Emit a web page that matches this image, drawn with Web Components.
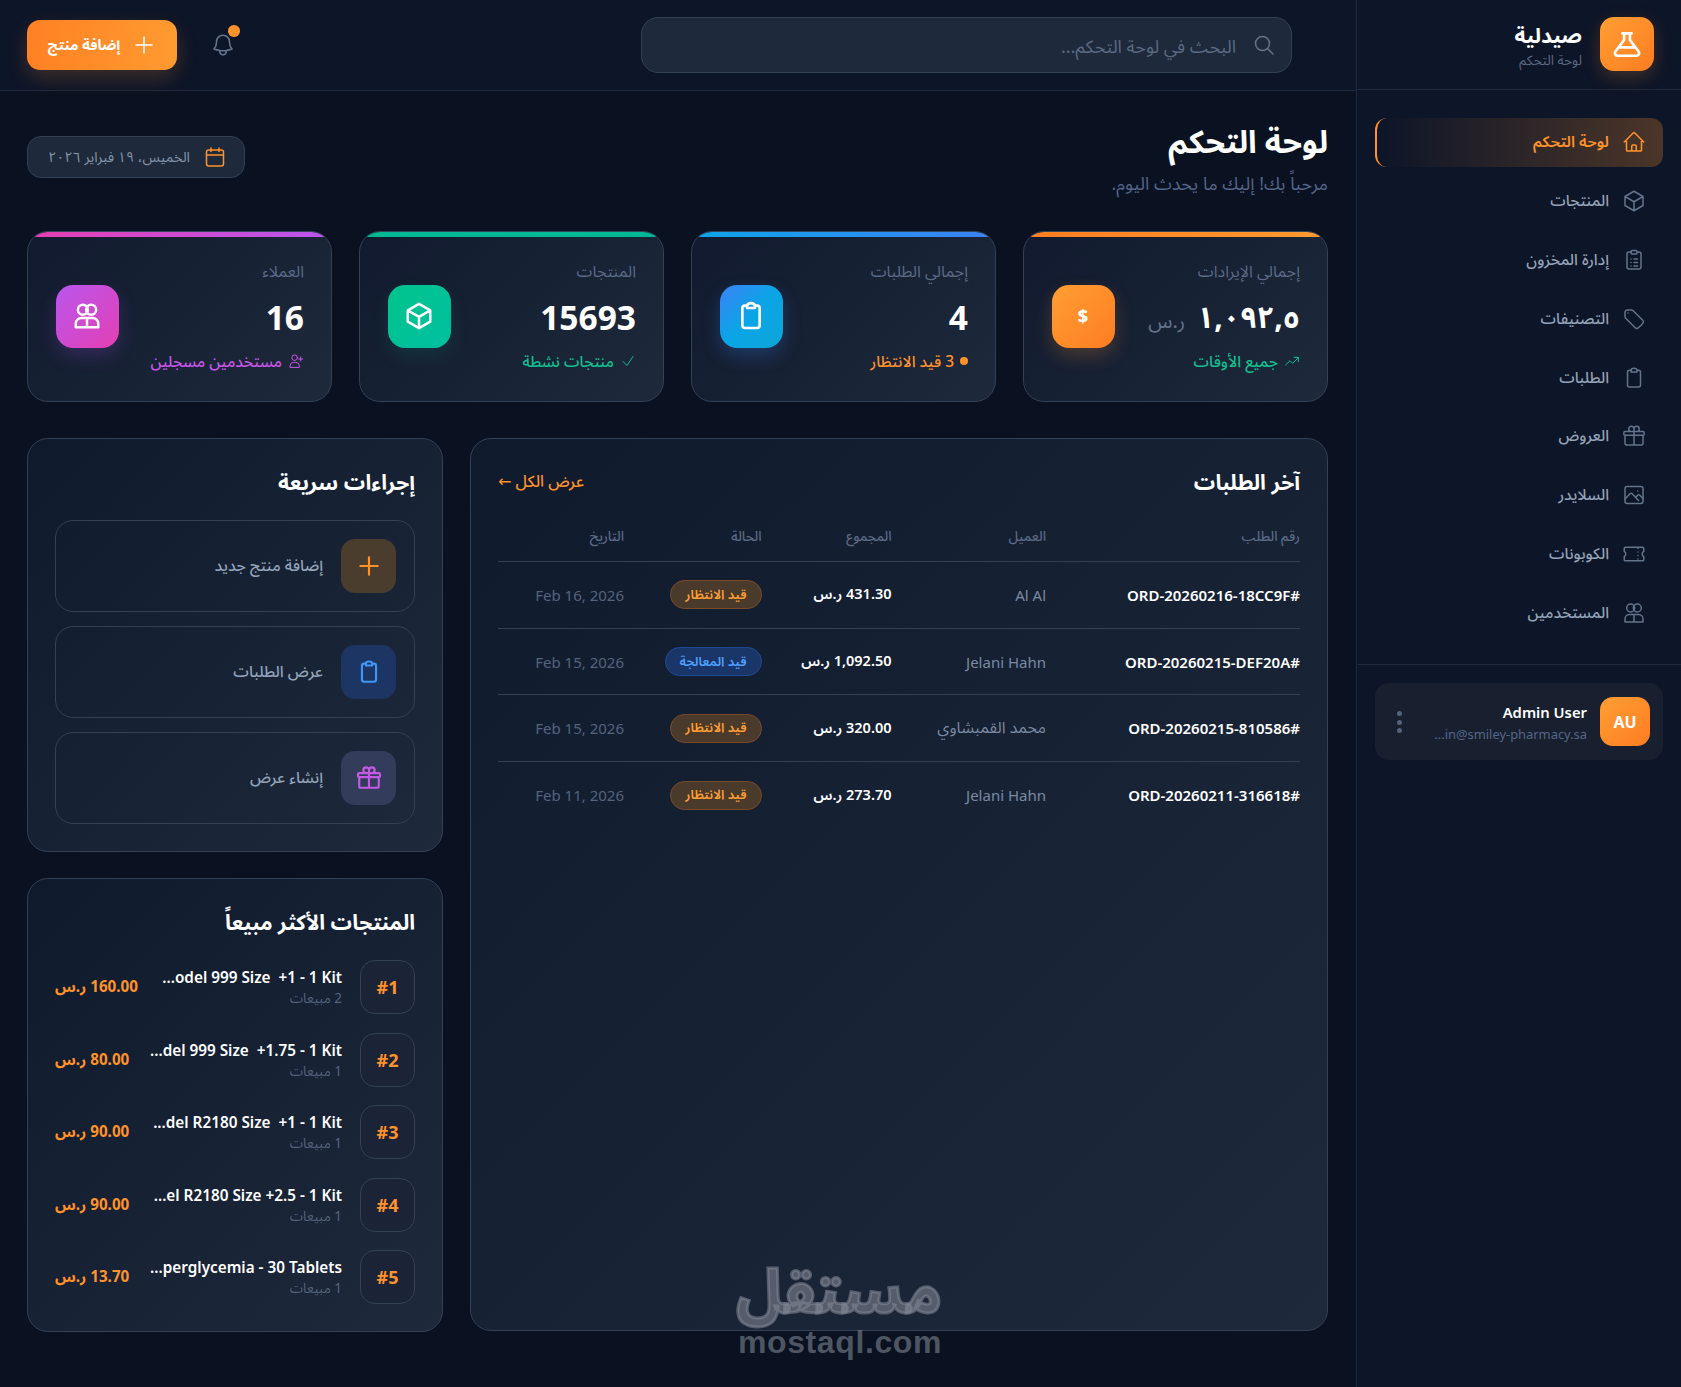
<!DOCTYPE html>
<html dir="rtl" lang="ar">
<head>
<meta charset="utf-8">
<title>صيدلية</title>
<style>
html,body{margin:0;padding:0;height:1387px;overflow:hidden;background:#0a1120}
body{font-family:"Noto Sans","Noto Sans Arabic","DejaVu Sans",sans-serif;color:#fff}
</style>
</head>
<body>
<x-app></x-app>
<script>
const P={
home:'<path d="M2.25 12l8.954-8.955c.44-.439 1.152-.439 1.591 0L21.75 12M4.5 9.75v10.125c0 .621.504 1.125 1.125 1.125H9.75v-4.875c0-.621.504-1.125 1.125-1.125h2.25c.621 0 1.125.504 1.125 1.125V21h4.125c.621 0 1.125-.504 1.125-1.125V9.75M8.25 21h8.25"/>',
cube:'<path d="M21 7.5l-9-5.25L3 7.5m18 0l-9 5.25m9-5.25v9l-9 5.25M3 7.5l9 5.25M3 7.5v9l9 5.25m0-9v9"/>',
list:'<path d="M9 4H7a2 2 0 0 0-2 2v13a2 2 0 0 0 2 2h10a2 2 0 0 0 2-2V6a2 2 0 0 0-2-2h-2"/><rect x="9" y="2.5" width="6" height="3.5" rx="1.2"/><path d="M9 11h.01M12 11h3.5M9 14.5h.01M12 14.5h3.5M9 18h.01M12 18h3.5"/>',
tag:'<path d="M9.568 3H5.25A2.25 2.25 0 003 5.25v4.318c0 .597.237 1.17.659 1.591l9.581 9.581c.699.699 1.78.872 2.607.33a18.095 18.095 0 005.223-5.223c.542-.827.369-1.908-.33-2.607L11.16 3.66A2.25 2.25 0 009.568 3z"/><path d="M6 6h.008v.008H6V6z"/>',
clip:'<path d="M9 4.2H7.5A2 2 0 0 0 5.5 6.2V19a2 2 0 0 0 2 2h9a2 2 0 0 0 2-2V6.2a2 2 0 0 0-2-2H15"/><path d="M9 4.5a3 2.2 0 0 1 6 0V6H9z"/>',
gift:'<path d="M21 11.25v8.25a1.5 1.5 0 01-1.5 1.5h-15a1.5 1.5 0 01-1.5-1.5v-8.25M12 4.875A2.625 2.625 0 109.375 7.5H12m0-2.625V7.5m0-2.625A2.625 2.625 0 1114.625 7.5H12m0 0V21m-9-9.75h18c.621 0 1.125-.504 1.125-1.125v-1.5c0-.621-.504-1.125-1.125-1.125H3c-.621 0-1.125.504-1.125 1.125v1.5c0 .621.504 1.125 1.125 1.125z"/>',
photo:'<rect x="3" y="3.5" width="18" height="17" rx="2.2"/><path d="M3 16l5-5.2a1.5 1.5 0 0 1 2.2 0l6.3 6.7M14 14l1.7-1.7a1.5 1.5 0 0 1 2.1 0L21 15.5M15.8 8h.01"/>',
ticket:'<path d="M16 6.5v.01m0 3.5v.01m0 3.5v.01m0 3.5v.01M3.375 5.25c-.621 0-1.125.504-1.125 1.125v3.026a2.999 2.999 0 010 5.198v3.026c0 .621.504 1.125 1.125 1.125h17.25c.621 0 1.125-.504 1.125-1.125v-3.026a2.999 2.999 0 010-5.198V6.375c0-.621-.504-1.125-1.125-1.125H3.375z"/>',
users:'<circle cx="8.7" cy="7" r="4"/><circle cx="15.3" cy="7" r="4"/><path d="M12 13.5H7.5A4.5 4.5 0 0 0 3 18v3h18v-3a4.5 4.5 0 0 0-4.500-4.500H12zM12 14v7"/>',
flask:'<path d="M8.500 4h7M9.800 4v5L3.300 17.600A2 2 0 0 0 5 20.800h14a2 2 0 0 0 1.700-3.200L14.200 9V4M6.500 14.500h11"/>',
search:'<circle cx="10.500" cy="10.500" r="7"/><path d="M21 21l-5.500-5.500"/>',
bell:'<path d="M14.857 17.082a23.848 23.848 0 005.454-1.310A8.967 8.967 0 0118 9.750V9A6 6 0 006 9v.750a8.967 8.967 0 01-2.312 6.022c1.733.640 3.560 1.085 5.455 1.310m5.714 0a24.255 24.255 0 01-5.714 0m5.714 0a3 3 0 11-5.714 0"/>',
plus:'<path d="M12 4v16M4 12h16"/>',
cal:'<rect x="3.500" y="5" width="17" height="16" rx="2.200"/><path d="M8 3v3.500M16 3v3.500M3.500 10h17M8 10h8"/>',
trend:'<path d="M2.500 18l6.500-6.500 4 4L21.500 7M15 6.500h6.500V13"/>',
check:'<path d="M4.500 12.750l6 6 9-13.500"/>',
userplus:'<circle cx="10" cy="7" r="4.200"/><path d="M3 21v-1.500A5.500 5.500 0 0 1 8.500 14h3a5.500 5.500 0 0 1 5.500 5.500V21zM19 6v6M16 9h6"/>'
};
function def(name,css,render){
  customElements.define(name,class extends HTMLElement{
    connectedCallback(){
      if(this.shadowRoot)return;
      const s=this.attachShadow({mode:'open'});
      s.innerHTML='<style>'+css+'</style>'+render(this);
    }
  });
}
const a=(e,n,d='')=>e.getAttribute(n)??d;

def('x-icon',`:host{display:inline-flex;flex:none;line-height:0}svg{display:block;fill:none;stroke:currentColor;stroke-linecap:round;stroke-linejoin:round}`,
e=>`<svg viewBox="0 0 24 24" width="${a(e,'size','24')}" height="${a(e,'size','24')}" stroke-width="${a(e,'sw','1.5')}">${P[a(e,'name')]||''}</svg>`);

def('x-nav-item',`:host{display:flex;align-items:center;gap:13px;height:48.8px;box-sizing:border-box;padding:0 17px;border-radius:12px;color:#94a3b8;font-size:15.500px;font-weight:500;white-space:nowrap}
:host([active]){color:#ff922b;background:linear-gradient(to left,rgba(255,146,43,.26),rgba(255,146,43,0));border-left:2px solid #ff922b;font-weight:600}
x-icon{color:#64748b}:host([active]) x-icon{color:#ff922b}`,
e=>`<x-icon name="${a(e,'icon')}"></x-icon><span><slot></slot></span>`);

def('x-sidebar',`:host{display:flex;flex-direction:column;width:325px;box-sizing:border-box;height:1387px;background:#0d1528;border-left:1px solid #1e293b}
.brand{height:90px;box-sizing:border-box;border-bottom:1px solid #1e293b;display:flex;align-items:center;gap:18px;padding:0 27px 0 18px}
.logo{width:54px;height:54px;border-radius:14px;background:linear-gradient(135deg,#ff9e33,#ff7d22);display:flex;align-items:center;justify-content:center;box-shadow:0 6px 18px rgba(255,146,43,.22);color:#fff;margin-top:-1px}
.t{font-size:21px;font-weight:700;line-height:30px;color:#fff}.s{font-size:13.500px;line-height:18px;color:#5b6a82;margin-top:1px}
nav{display:flex;flex-direction:column;gap:10px;padding:28px 18px 0;height:575px;box-sizing:border-box;border-bottom:1px solid #1e293b}
.u{margin:18px 18px 0;height:77px;box-sizing:border-box;border-radius:14px;background:#18202f;display:flex;align-items:center;gap:13px;padding:0 13px}
.av{width:50px;height:49px;border-radius:13px;background:linear-gradient(135deg,#ff9e33,#ff7d22);display:flex;align-items:center;justify-content:center;font-weight:700;font-size:16px;color:#fff;flex:none}
.n{font-size:14.800px;font-weight:600;line-height:22px;color:#fff;padding-top:1px}.m{font-size:12.900px;line-height:20px;color:#54658a;direction:ltr;text-align:right;margin-top:1px}
.i{flex:1}.d{display:flex;flex-direction:column;gap:3.500px;margin-left:9px;margin-top:1px}.d b{width:5px;height:5px;border-radius:50%;background:#55637a;display:block}`,
e=>`<div class="brand"><div class="logo"><x-icon name="flask" size="32" sw="2"></x-icon></div><div><div class="t">صيدلية</div><div class="s">لوحة التحكم</div></div></div>
<nav>
<x-nav-item icon="home" active>لوحة التحكم</x-nav-item>
<x-nav-item icon="cube">المنتجات</x-nav-item>
<x-nav-item icon="list">إدارة المخزون</x-nav-item>
<x-nav-item icon="tag">التصنيفات</x-nav-item>
<x-nav-item icon="clip">الطلبات</x-nav-item>
<x-nav-item icon="gift">العروض</x-nav-item>
<x-nav-item icon="photo">السلايدر</x-nav-item>
<x-nav-item icon="ticket">الكوبونات</x-nav-item>
<x-nav-item icon="users">المستخدمين</x-nav-item>
</nav>
<div class="u"><div class="av">AU</div><div class="i"><div class="n">Admin User</div><div class="m">...in@smiley-pharmacy.sa</div></div><div class="d"><b></b><b></b><b></b></div></div>`);

def('x-topbar',`:host{display:flex;align-items:center;justify-content:space-between;height:91px;box-sizing:border-box;border-bottom:1px solid #1e293b;background:#0d1528;padding:0 64px 0 27px}
.se{width:651px;height:56px;box-sizing:border-box;border:1px solid #334155;border-radius:17px;background:#1e293b;display:flex;align-items:center;gap:16px;padding:0 15px;color:#64748b;font-size:18px}
.se span{color:#5b6a82;padding-top:3px}
.l{display:flex;align-items:center;gap:33px;direction:rtl}
.bell{position:relative;color:#64748b;display:flex}.bell i{position:absolute;top:-7px;left:18px;width:11.500px;height:11.500px;border-radius:50%;background:#ff922b}
.btn{width:150px;height:50px;border-radius:13px;background:linear-gradient(to left,#ff9a30,#ff8123);box-shadow:0 8px 20px rgba(255,146,43,.2);display:flex;align-items:center;justify-content:center;gap:12px;font-weight:700;font-size:14.500px;color:#fff}
.btn span{padding-top:1px}`,
e=>`<div class="se"><x-icon name="search"></x-icon><span>البحث في لوحة التحكم...</span></div>
<div class="l"><div class="bell"><i></i><x-icon name="bell" size="26"></x-icon></div><div class="btn"><x-icon name="plus"></x-icon><span>إضافة منتج</span></div></div>`);

def('x-stat-card',`:host{display:flex;align-items:center;justify-content:space-between;height:171px;box-sizing:border-box;padding:0 27px 0 27.500px;position:relative;overflow:hidden;border:1px solid #334155;border-radius:21px;background:linear-gradient(135deg,#111a2e,#1e293b)}
.bar{position:absolute;top:0;left:0;right:0;height:5px;background:var(--bar)}
.tx{margin-top:-2px}
.lb{font-size:16px;line-height:20px;color:#5b6a85}
.v{font-size:var(--vf,33.500px);font-weight:700;line-height:44px;height:44px;margin-top:14px;color:#fff;white-space:nowrap;letter-spacing:var(--vs,0)}
.v small{font-size:20px;font-weight:400;color:#64748b;margin-right:12px;letter-spacing:0}
.sb{display:flex;align-items:center;gap:6px;font-size:15.500px;font-weight:500;line-height:20px;margin-top:12px;color:var(--c)}
.ic{width:63px;height:63px;border-radius:17px;background:var(--ic);display:flex;align-items:center;justify-content:center;color:#fff;box-shadow:0 8px 18px var(--sh);font-weight:800;font-size:18px;margin-top:-1px}
.dot{width:8px;height:8px;border-radius:50%;background:var(--c)}`,
e=>{
 const ic=a(e,'icon');
 const si=a(e,'subicon');
 return `<div class="bar"></div><div class="tx"><div class="lb">${a(e,'label')}</div><div class="v" >${a(e,'value')}${e.hasAttribute('unit')?`<small>${a(e,'unit')}</small>`:''}</div><div class="sb">${si==='dot'?'<span class="dot"></span>':`<x-icon name="${si}" size="16" sw="1.5"></x-icon>`}<span>${a(e,'sub')}</span></div></div><div class="ic">${ic==='$'?'$':`<x-icon name="${ic}" size="${a(e,'isize','30')}" sw="2"></x-icon>`}</div>`;
});

def('x-panel',`:host{display:block;box-sizing:border-box;padding:27px;border:1px solid #334155;border-radius:21px;background:linear-gradient(135deg,#101a2d,#1e293b)}
.h{display:flex;justify-content:space-between;align-items:center;height:36px;margin-bottom:var(--mb,18px)}
h2{margin:-4px 0 0;font-size:21.200px;font-weight:700;color:#fff;line-height:36px}
.lk{font-size:16px;font-weight:500;color:#ff922b;margin-top:-5px}`,
e=>`<div class="h"><h2>${a(e,'heading')}</h2>${e.hasAttribute('link')?`<span class="lk">${a(e,'link')}</span>`:''}</div><slot></slot>`);

def('x-action',`:host{display:flex;align-items:center;gap:18px;height:92px;box-sizing:border-box;padding:0 18px;border:1px solid #334155;border-radius:18px;color:#94a3b8;font-size:15.700px;font-weight:500}
.i{width:55px;height:54px;border-radius:14px;display:flex;align-items:center;justify-content:center;background:var(--bg);color:var(--c)}`,
e=>`<div class="i"><x-icon name="${a(e,'icon')}" size="26" sw="2"></x-icon></div><span><slot></slot></span>`);

def('x-rank-row',`:host{display:flex;align-items:center;gap:18px;height:54px}
.r{width:55px;height:54px;box-sizing:border-box;border:1px solid #334155;border-radius:15px;background:#1b2436;display:flex;align-items:center;justify-content:center;color:#ff922b;font-weight:700;font-size:18px;flex:none}
.m{flex:1;min-width:0}
.n{font-size:15.300px;font-weight:600;line-height:22px;color:#fff;direction:ltr;text-align:right;white-space:pre}
.s{font-size:13.500px;line-height:20px;color:#55637c}
.p{font-size:15.200px;font-weight:700;color:#ff922b;flex:none;white-space:nowrap}`,
e=>`<div class="r">#${a(e,'rank')}</div><div class="m"><div class="n">${a(e,'name')}</div><div class="s">${a(e,'count')} مبيعات</div></div><div class="p">${a(e,'price')} ر.س</div>`);

def('x-badge',`:host{display:inline-flex;align-items:center;height:29px;box-sizing:border-box;padding:0 14px;border-radius:15px;font-size:13px;font-weight:600;border:1px solid var(--b);background:var(--bg);color:var(--c);white-space:nowrap}
:host([kind=pending]){--b:#7c4a26;--bg:#4a3a2b;--c:#ff9f33}
:host([kind=processing]){--b:#1e4a95;--bg:#1a3567;--c:#4ea0ff}`,e=>`<slot></slot>`);

const cols='grid-template-columns:254px 154.500px 130px 137.500px 126px;';
def('x-order-head',`:host{display:grid;${cols}align-items:center;height:51px;margin-top:9px;box-sizing:border-box;border-bottom:1px solid #334155;color:#5b6a85;font-size:13.500px;font-weight:500}`,
e=>`<span>رقم الطلب</span><span>العميل</span><span>المجموع</span><span>الحالة</span><span>التاريخ</span>`);
def('x-order-row',`:host{display:grid;${cols}align-items:center;height:66.700px;box-sizing:border-box;border-bottom:1px solid #334155;font-size:15px}
:host([last]){border-bottom:0}
.o{font-weight:600;color:#fff}
.c{color:#7a8aa2}.t{font-weight:600;color:#fff;font-size:14.500px}.d{color:#55637c;direction:ltr;text-align:right}
.ar{font-size:16px}`,
e=>`<span class="o">${a(e,'order')}</span><span class="c ${/[a-z]/i.test(a(e,'customer'))?'':'ar'}">${a(e,'customer')}</span><span class="t">${a(e,'total')} ر.س</span><span><x-badge kind="${a(e,'kind')}">${a(e,'status')}</x-badge></span><span class="d">${a(e,'date')}</span>`);

def('x-watermark',`:host{position:absolute;left:738px;top:1258px;width:204px;text-align:center;color:rgba(125,132,145,.6);pointer-events:none;direction:rtl}
.a{font-size:60px;font-weight:800;line-height:64px;height:64px;white-space:nowrap;-webkit-text-stroke:3px rgba(125,132,145,.6)}
.b{font:700 32px/34px "Liberation Sans",sans-serif;direction:ltr;letter-spacing:.6px;margin-top:3px}`,
e=>`<div class="a">مستقل</div><div class="b">mostaql.com</div>`);

def('x-app',`:host{display:flex;direction:rtl;width:1681px;height:1387px;background:#0a1120;overflow:hidden;position:relative}
.main{flex:1;min-width:0}
.c{padding:26px 28px 0 27px}
.hd{display:flex;justify-content:space-between;align-items:center;height:80px;margin-bottom:34px}
h1{margin:0;font-size:31.500px;font-weight:700;line-height:44px}
.sub{font-size:18px;line-height:24px;color:#54658a;margin-top:8px}
.date{display:flex;align-items:center;gap:13px;height:42px;box-sizing:border-box;padding:0 17px;border:1px solid #334155;border-radius:14px;background:#1e293b;color:#8493a8;font-size:14.200px;width:218px;white-space:nowrap}
.date x-icon{color:#ff922b}
.st{display:grid;grid-template-columns:repeat(4,1fr);gap:27px;margin-bottom:36px}
.g{display:grid;grid-template-columns:858px 416px;gap:27px;height:893px}
.side{display:flex;flex-direction:column;gap:26px;height:893px}
.act{display:flex;flex-direction:column;gap:14px}
.rk{display:flex;flex-direction:column;gap:18.500px}`,
e=>`<x-sidebar></x-sidebar><div class="main"><x-topbar></x-topbar><div class="c">
<div class="hd"><div><h1>لوحة التحكم</h1><div class="sub">مرحباً بك! إليك ما يحدث اليوم.</div></div><div class="date"><x-icon name="cal"></x-icon><span>الخميس، ١٩ فبراير ٢٠٢٦</span></div></div>
<div class="st">
<x-stat-card style="--vs:-3px;--vf:30px;--bar:linear-gradient(to left,#ff9a30,#ff7d22);--ic:linear-gradient(135deg,#ff9e33,#ff7d22);--sh:rgba(255,146,43,.22);--c:#10c090" label="إجمالي الإيرادات" value="١,٠٩٢,٥" unit="ر.س" sub="جميع الأوقات" subicon="trend" icon="$"></x-stat-card>
<x-stat-card style="--bar:linear-gradient(to left,#3b82f6,#0ea5e9);--ic:linear-gradient(135deg,#3b82f6,#0aa5e6 50%,#0ea5d8);--sh:rgba(59,130,246,.25);--c:#ff922b" label="إجمالي الطلبات" value="4" sub="3 قيد الانتظار" subicon="dot" icon="clip" isize="32"></x-stat-card>
<x-stat-card style="--bar:#00b894;--ic:linear-gradient(135deg,#00c48c,#00bfa0);--sh:rgba(0,190,150,.12);--c:#10c090" label="المنتجات" value="15693" sub="منتجات نشطة" subicon="check" icon="cube"></x-stat-card>
<x-stat-card style="--bar:linear-gradient(to left,#b956ee,#e53fb2);--ic:linear-gradient(135deg,#b956ee,#e53fb2);--sh:rgba(170,85,240,.2);--c:#c956e8" label="العملاء" value="16" sub="مستخدمين مسجلين" subicon="userplus" icon="users"></x-stat-card>
</div>
<div class="g">
<x-panel heading="آخر الطلبات" link="عرض الكل ←" style="--mb:0">
<x-order-head></x-order-head>
<x-order-row order="#ORD-20260216-18CC9F" customer="Al Al" total="431.30" kind="pending" status="قيد الانتظار" date="Feb 16, 2026"></x-order-row>
<x-order-row order="#ORD-20260215-DEF20A" customer="Jelani Hahn" total="1,092.50" kind="processing" status="قيد المعالجة" date="Feb 15, 2026"></x-order-row>
<x-order-row order="#ORD-20260215-810586" customer="محمد القمبشاوي" total="320.00" kind="pending" status="قيد الانتظار" date="Feb 15, 2026"></x-order-row>
<x-order-row last order="#ORD-20260211-316618" customer="Jelani Hahn" total="273.70" kind="pending" status="قيد الانتظار" date="Feb 11, 2026"></x-order-row>
</x-panel>
<div class="side">
<x-panel heading="إجراءات سريعة"><div class="act">
<x-action icon="plus" style="--bg:#4a3d2e;--c:#ff922b">إضافة منتج جديد</x-action>
<x-action icon="clip" style="--bg:#1c3563;--c:#3f96f5">عرض الطلبات</x-action>
<x-action icon="gift" style="--bg:#333c5a;--c:#c45ae6">إنشاء عرض</x-action>
</div></x-panel>
<x-panel heading="المنتجات الأكثر مبيعاً"><div class="rk">
<x-rank-row rank="1" name="...odel 999 Size  +1 - 1 Kit" count="2" price="160.00"></x-rank-row>
<x-rank-row rank="2" name="...del 999 Size  +1.75 - 1 Kit" count="1" price="80.00"></x-rank-row>
<x-rank-row rank="3" name="...del R2180 Size  +1 - 1 Kit" count="1" price="90.00"></x-rank-row>
<x-rank-row rank="4" name="...el R2180 Size +2.5 - 1 Kit" count="1" price="90.00"></x-rank-row>
<x-rank-row rank="5" name="...perglycemia - 30 Tablets" count="1" price="13.70"></x-rank-row>
</div></x-panel>
</div>
</div>
</div></div><x-watermark></x-watermark>`);
</script>
</body>
</html>
